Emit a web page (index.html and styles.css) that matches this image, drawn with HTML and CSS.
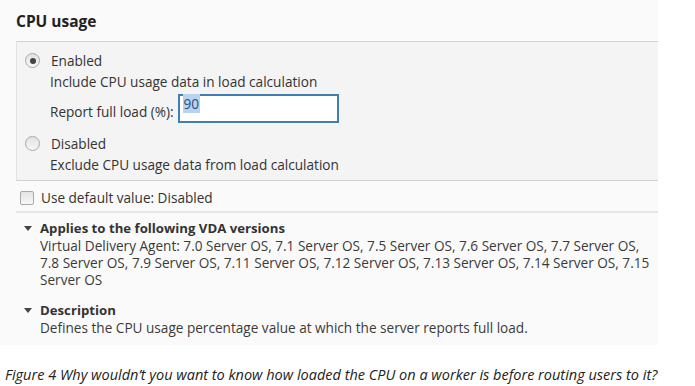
FILE: index.html
```html
<!DOCTYPE html>
<html lang="en">
<head>
    <meta charset="UTF-8">
    <title>CPU usage</title>
    <link rel="stylesheet" href="styles.css">
</head>
<body>
    <div class="panel">
        <h2 class="title">CPU usage</h2>

        <div class="options">
            <div class="option">
                <span class="radio checked"></span>
                <span>Enabled</span>
            </div>
            <div class="hint">Include CPU usage data in load calculation</div>
            <div class="load-row">
                <span class="load-label">Report full load (%):</span>
                <div class="load-input"><span class="selected">90</span></div>
            </div>
            <div class="option">
                <span class="radio"></span>
                <span>Disabled</span>
            </div>
            <div class="hint">Exclude CPU usage data from load calculation</div>
        </div>

        <div class="default-row">
            <span class="checkbox"></span>
            <span>Use default value: Disabled</span>
        </div>

        <div class="section">
            <div class="section-head"><span class="arrow"></span>Applies to the following VDA versions</div>
            <p class="section-text">Virtual Delivery Agent: 7.0 Server OS, 7.1 Server OS, 7.5 Server OS, 7.6 Server OS, 7.7 Server OS, 7.8 Server OS, 7.9 Server OS, 7.11 Server OS, 7.12 Server OS, 7.13 Server OS, 7.14 Server OS, 7.15 Server OS</p>
        </div>

        <div class="section">
            <div class="section-head"><span class="arrow"></span>Description</div>
            <p class="section-text">Defines the CPU usage percentage value at which the server reports full load.</p>
        </div>
    </div>

    <p class="caption">Figure 4 Why wouldn’t you want to know how loaded the CPU on a worker is before routing users to it?</p>
</body>
</html>
```

FILE: styles.css
```css
body {
    margin: 0;
    background: #ffffff;
    font-family: "Open Sans", Arial, sans-serif;
    font-size: 13.6px;
    color: #333333;
}

.panel {
    width: 658px;
    background: #fafafa;
    padding: 11px 0 9px;
}

.title {
    margin: 0 0 10px 16px;
    font-size: 15.5px;
    font-weight: bold;
    line-height: 20px;
    color: #222222;
}

.options {
    margin-left: 16px;
    background: #f4f4f4;
    border-top: 1px solid #d2d2d2;
    border-bottom: 1px solid #d2d2d2;
    border-left: 1px solid #e2e2e2;
    padding: 10px 0 7px;
}

.option {
    display: flex;
    align-items: center;
    gap: 11px;
    padding-left: 8px;
    line-height: 17px;
}

.hint {
    padding-left: 33px;
    line-height: 17px;
    margin-top: 4px;
}

.radio {
    width: 13px;
    height: 13px;
    border: 1px solid #a9a9a9;
    border-radius: 50%;
    background: linear-gradient(#e2e2e2, #f7f7f7);
    position: relative;
}

.radio.checked::after {
    content: "";
    position: absolute;
    left: 3.5px;
    top: 3.5px;
    width: 6px;
    height: 6px;
    border-radius: 50%;
    background: #444444;
}

.load-row {
    display: flex;
    align-items: flex-end;
    gap: 4px;
    padding-left: 33px;
    margin: 4px 0 12px;
}

.load-label {
    line-height: 17px;
    margin-bottom: 3px;
}

.load-input {
    width: 154px;
    height: 25px;
    border: 2px solid #3f7fb4;
    background: #ffffff;
    padding-left: 3px;
    line-height: 16px;
}

.selected {
    background: #b8d3ee;
    color: #2b4f80;
    padding: 0 1px;
}

.default-row {
    display: flex;
    align-items: center;
    gap: 7px;
    margin-left: 16px;
    padding: 8px 0 5px 4px;
    border-bottom: 2px solid #e6e6e6;
    line-height: 17px;
}

.checkbox {
    width: 12px;
    height: 12px;
    border: 1px solid #a9a9a9;
    border-radius: 2px;
    background: linear-gradient(#e4e4e4, #f8f8f8);
}

.section {
    margin-top: 7px;
    padding-left: 40px;
}

.section + .section {
    margin-top: 14px;
}

.section-head {
    position: relative;
    font-weight: bold;
    font-size: 13.2px;
    line-height: 17px;
    color: #333333;
}

.arrow {
    position: absolute;
    left: -16px;
    top: 6px;
    border-left: 4.5px solid transparent;
    border-right: 4.5px solid transparent;
    border-top: 5px solid #444444;
}

.section-text {
    margin: 0;
    line-height: 17px;
    padding-right: 8px;
    color: #3a3a3a;
}

.caption {
    margin: 20px 0 0 5px;
    font-family: "Open Sans", Arial, sans-serif;
    font-style: italic;
    font-size: 14.5px;
    color: #222222;
}
```
